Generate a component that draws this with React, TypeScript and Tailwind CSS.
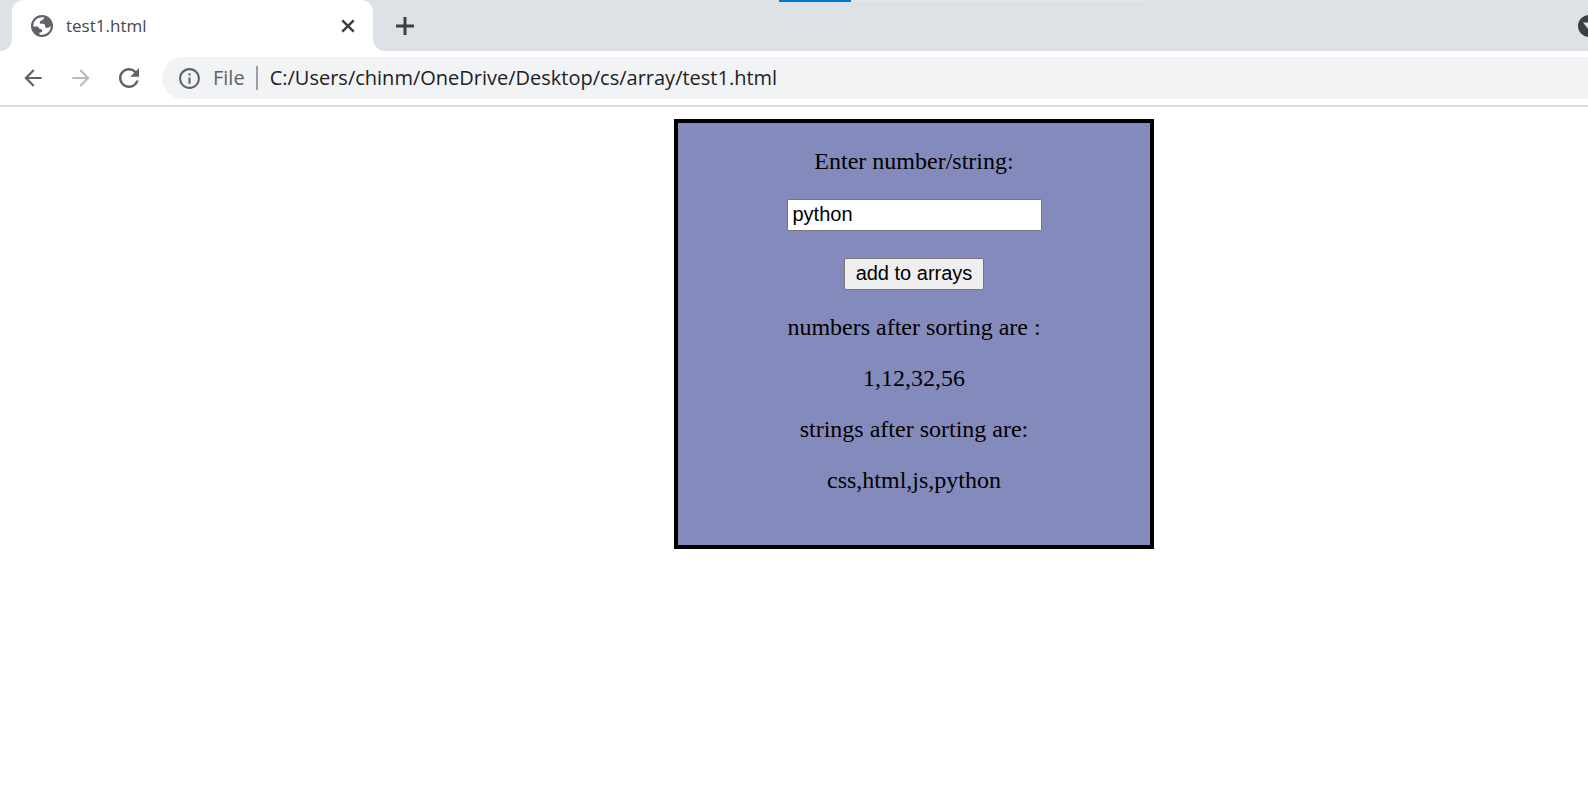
import { MdArrowBack, MdArrowForward, MdInfoOutline, MdRefresh } from "react-icons/md";

function GlobeIcon() {
  return (
    <svg viewBox="0 0 22 22" className="size-[22px] shrink-0" aria-hidden="true">
      <circle cx="11" cy="11" r="11" fill="#5f6368" />
      <path
        d="M2.300 11.500C2.100 6.400 6 2.300 11 2.300h2.200c-.2 1.700-1 2.700-2.600 3.100-1.200.3-1.900 1-1.900 2 0 .9.700 1.400 1.700 1.400h1.400c1.500 0 2.300.8 2.300 2.200 0 1.200.7 1.900 2 1.900 1.200 0 2.100-.6 3.600-1.900.1 4.900-3.800 8.700-8.700 8.700-1 0-1.700-.1-2.500-.3v-2h1c1 0 1.700-.7 1.700-1.700s-.6-1.600-1.600-1.700c-1.300-.1-2.100-.8-2.500-2.500z"
        fill="#fff"
      />
    </svg>
  );
}

function TabStrip() {
  return (
    <div className="relative flex h-[51px] overflow-hidden bg-[#dee1e6]">
      <div className="absolute top-0 left-[779px] flex h-0.5 w-[364px] bg-[#e6e6e6]">
        <div className="w-[72px] bg-[#0078d7]" />
      </div>
      <div className="flex w-3 bg-white">
        <div className="w-full rounded-br-xl bg-[#dee1e6]" />
      </div>
      <div className="flex w-[361px] items-center rounded-t-xl bg-white pr-[18px] pl-[19px]">
        <GlobeIcon />
        <span className="ml-[13px] flex-1 text-[17px] leading-6 text-[#45494d]">test1.html</span>
        <button type="button" aria-label="Close tab" className="text-[#3c4043]">
          <svg viewBox="0 0 14 14" className="size-3.5" stroke="currentColor" strokeWidth="2.5">
            <path d="M1.300 1.300l11.400 11.400M12.700 1.300L1.300 12.700" />
          </svg>
        </button>
      </div>
      <div className="flex w-3 bg-white">
        <div className="w-full rounded-bl-xl bg-[#dee1e6]" />
      </div>
      <button type="button" aria-label="New tab" className="ml-[11px] text-[#3c4043]">
        <svg viewBox="0 0 18 18" className="size-[18px]" stroke="currentColor" strokeWidth="3">
          <path d="M9 0v18M0 9h18" />
        </svg>
      </button>
      <button type="button" aria-label="Search tabs" className="-mr-3 ml-auto">
        <svg viewBox="0 0 22 22" className="size-[22px]">
          <circle cx="11" cy="11" r="11" fill="#3c4043" />
          <path d="M5 7.500h12l-6 7.500z" fill="#dee1e6" />
        </svg>
      </button>
    </div>
  );
}

function Toolbar() {
  return (
    <div className="flex h-14 items-center border-b-2 border-[#dadce0] bg-white pl-5">
      <div className="flex items-center gap-[22px] text-[#5f6368]">
        <button type="button" aria-label="Back">
          <MdArrowBack className="size-[26px]" />
        </button>
        <button type="button" aria-label="Forward" className="text-[#babcbe]">
          <MdArrowForward className="size-[26px]" />
        </button>
        <button type="button" aria-label="Reload" className="-ml-0.5">
          <MdRefresh className="size-[30px]" />
        </button>
      </div>
      <div className="ml-[18px] flex h-[42px] flex-1 items-center rounded-l-full bg-[#f1f3f4] pl-[15px] text-[20px]">
        <MdInfoOutline className="size-[25px] text-[#5f6368]" />
        <span className="ml-[11px] text-[#5f6368]">File</span>
        <span className="mr-3 ml-[11px] h-6 w-0.5 bg-[#9a9da1]" />
        <input
          aria-label="Address"
          defaultValue="C:/Users/chinm/OneDrive/Desktop/cs/array/test1.html"
          className="min-w-0 flex-1 bg-transparent text-[#202124] outline-none"
        />
      </div>
    </div>
  );
}

export default function App() {
  return (
    <div className="min-h-screen overflow-x-hidden bg-white font-['Open_Sans',sans-serif]">
      <header>
        <TabStrip />
        <Toolbar />
      </header>
      <main className="pt-3 pl-[240px]">
        <form className="mx-auto flex w-[480px] flex-col items-center gap-6 border-4 border-black bg-[#858abc] pt-[25px] pb-[51px] font-['Liberation_Serif',serif] text-[24px] leading-[27px] text-black">
          <label htmlFor="entry">Enter number/string:</label>
          <div className="flex flex-col items-center gap-[27px]">
            <input
              id="entry"
              defaultValue="python"
              className="h-8 w-[255px] rounded-[1px] border border-[#767676] bg-white px-[5px] pb-0.5 font-['Liberation_Sans',sans-serif] text-[20px] outline-none"
            />
            <button
              type="button"
              className="h-8 rounded-[2px] border border-[#767676] bg-[#efefef] px-[11px] pb-0.5 font-['Liberation_Sans',sans-serif] text-[20px]"
            >
              add to arrays
            </button>
          </div>
          <p>numbers after sorting are :</p>
          <p>1,12,32,56</p>
          <p>strings after sorting are:</p>
          <p>css,html,js,python</p>
        </form>
      </main>
    </div>
  );
}
